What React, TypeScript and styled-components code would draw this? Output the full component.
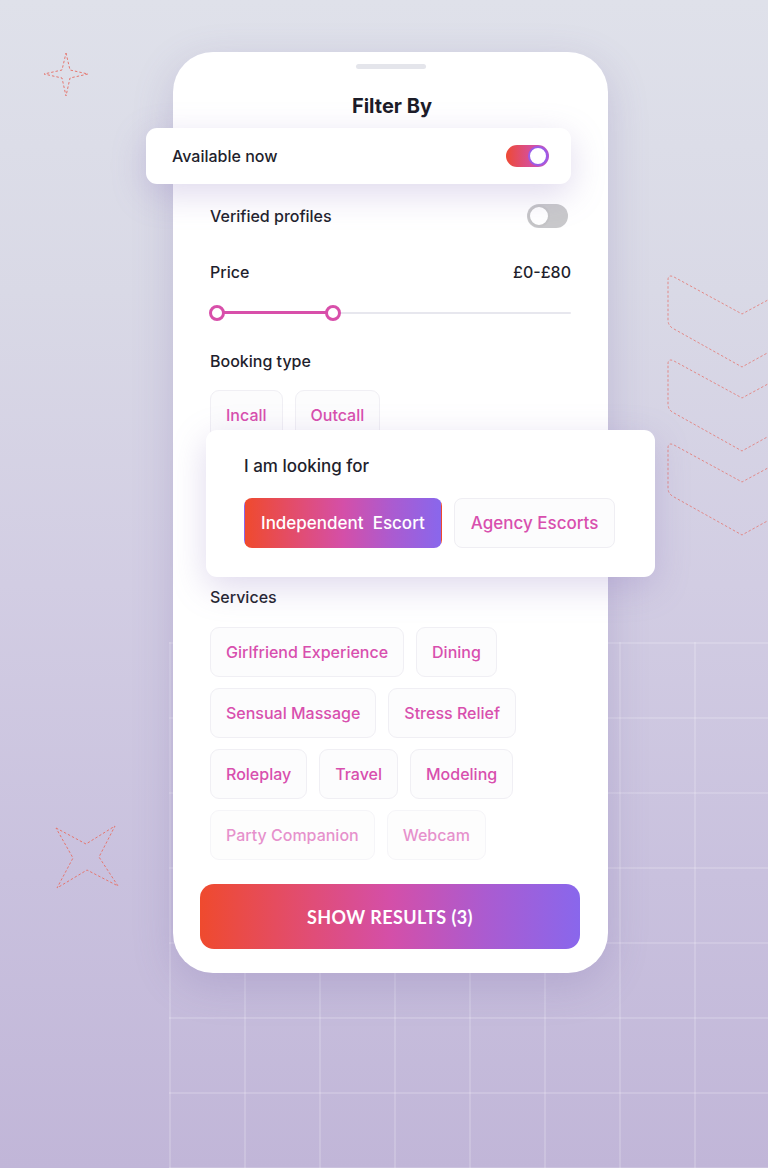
import React from 'react';
import styled, { createGlobalStyle } from 'styled-components';

const GlobalStyle = createGlobalStyle`
  body {
    margin: 0;
    font-family: Inter, "Noto Sans", sans-serif;
    color: #1e1e2c;
  }
`;

const brandGradient = 'linear-gradient(90deg, #ef4a2e 0%, #e04d78 30%, #d44fa8 50%, #ab5bd0 75%, #8967ec 100%)';

// Page and background decorations
const Page = styled.div`
  position: relative;
  width: 768px;
  height: 1168px;
  overflow: hidden;
  box-sizing: border-box;
  padding: 52px 0 0 173px;
  background: linear-gradient(180deg, #dfe1ea 0%, #d9d9e6 25%, #d2cde3 50%, #c9c1de 75%, #c1b6d8 100%);
`;

const Grid = styled.div`
  position: absolute;
  left: 169px;
  top: 642px;
  right: 0;
  bottom: 0;
  background-image:
    linear-gradient(to right, rgba(255, 255, 255, 0.16) 2px, transparent 2px),
    linear-gradient(to bottom, rgba(255, 255, 255, 0.16) 2px, transparent 2px);
  background-size: 75px 75px;
`;

const Deco = styled.svg<{ $left: number; $top: number }>`
  position: absolute;
  left: ${(p) => p.$left}px;
  top: ${(p) => p.$top}px;
  overflow: visible;
`;

// Card
const Card = styled.div`
  position: relative;
  z-index: 1;
  width: 435px;
  height: 921px;
  box-sizing: border-box;
  padding: 12px 37px 24px;
  background: #fff;
  border-radius: 40px;
  box-shadow: 0 12px 40px rgba(110, 90, 160, 0.22);
  display: flex;
  flex-direction: column;
`;

const Handle = styled.div`
  width: 70px;
  height: 5px;
  border-radius: 3px;
  background: #e4e5eb;
  align-self: center;
`;

const Title = styled.h1`
  margin: 25px 0 0 3px;
  font-size: 20px;
  line-height: 24px;
  font-weight: 700;
  text-align: center;
  color: #1c1c28;
`;

const FloatCard = styled.div<{ $width: number; $left: number; $top: number }>`
  position: relative;
  z-index: 2;
  width: ${(p) => p.$width}px;
  margin-left: ${(p) => p.$left}px;
  margin-top: ${(p) => p.$top}px;
  box-sizing: border-box;
  background: #fff;
  border-radius: 11px;
  box-shadow: 0 10px 34px rgba(140, 120, 190, 0.28);
`;

const AvailableRow = styled.div`
  height: 56px;
  padding: 0 22px 0 26px;
  display: flex;
  align-items: center;
  justify-content: space-between;
`;

const Row = styled.div<{ $top: number }>`
  margin-top: ${(p) => p.$top}px;
  height: 24px;
  display: flex;
  align-items: center;
  justify-content: space-between;
`;

const Label = styled.span<{ $size?: number }>`
  font-size: ${(p) => p.$size ?? 16}px;
  line-height: 24px;
  font-weight: 500;
  color: #1f1f2d;
`;

const Value = styled.span`
  font-size: 16px;
  font-weight: 500;
  color: #1f1f2d;
`;

const Toggle = styled.div<{ $on?: boolean }>`
  position: relative;
  width: ${(p) => (p.$on ? 43 : 41)}px;
  height: ${(p) => (p.$on ? 22 : 24)}px;
  border-radius: 12px;
  margin-right: ${(p) => (p.$on ? 0 : 3)}px;
  background: ${(p) => (p.$on ? 'linear-gradient(90deg, #ee4a34 0%, #d64f9c 60%, #b456cf 100%)' : '#c9c9cb')};
`;

const Knob = styled.div<{ $on?: boolean }>`
  position: absolute;
  top: 1px;
  ${(p) => (p.$on ? 'right: 1px;' : 'left: 1px;')}
  width: ${(p) => (p.$on ? 20 : 22)}px;
  height: ${(p) => (p.$on ? 20 : 22)}px;
  box-sizing: border-box;
  border-radius: 50%;
  background: #fff;
  border: 2px solid ${(p) => (p.$on ? '#9a5ce8' : '#c4c4c6')};
`;

const Slider = styled.div`
  position: relative;
  margin-top: 21px;
  height: 16px;
`;

const Track = styled.div`
  position: absolute;
  left: 0;
  right: 0;
  top: 7px;
  height: 2px;
  border-radius: 2px;
  background: #e7e7ee;
`;

const TrackFill = styled.div`
  position: absolute;
  top: 6px;
  height: 3px;
  background: #d84faa;
`;

const Thumb = styled.div`
  position: absolute;
  top: 0;
  width: 16px;
  height: 16px;
  margin-left: -8px;
  box-sizing: border-box;
  border-radius: 50%;
  border: 3px solid #d84faa;
  background: #fff;
`;

const Section = styled.div<{ $top: number }>`
  margin-top: ${(p) => p.$top}px;
  font-size: 16px;
  line-height: 24px;
  font-weight: 500;
  color: #1f1f2d;
`;

const Chips = styled.div<{ $top: number }>`
  margin-top: ${(p) => p.$top}px;
  display: flex;
  flex-wrap: wrap;
  gap: 11px 12px;
`;

const Chip = styled.div<{ $faded?: boolean }>`
  height: 50px;
  box-sizing: border-box;
  padding: 0 15px;
  display: flex;
  align-items: center;
  border: 1px solid #f0eff4;
  border-radius: 9px;
  background: #fcfcfd;
  font-size: 16px;
  font-weight: 500;
  color: #d84fae;
  opacity: ${(p) => (p.$faded ? 0.62 : 1)};
`;

const LookingBody = styled.div`
  padding: 24px 38px 29px;
  display: flex;
  flex-direction: column;
  gap: 20px;
`;

const ChoiceRow = styled.div`
  display: flex;
  gap: 12px;
`;

const Choice = styled.div<{ $active?: boolean }>`
  height: 50px;
  box-sizing: border-box;
  padding: 0 16px;
  display: flex;
  align-items: center;
  border-radius: 8px;
  font-size: 17px;
  font-weight: 500;
  white-space: pre;
  color: ${(p) => (p.$active ? '#fff' : '#d84fae')};
  background: ${(p) => (p.$active ? brandGradient : '#fcfcfd')};
  border: 1px solid ${(p) => (p.$active ? 'transparent' : '#efeef3')};
`;

const ShowButton = styled.button`
  margin: 24px 0 0 -10px;
  width: 380px;
  height: 65px;
  border: none;
  border-radius: 14px;
  background: ${brandGradient};
  color: #fff;
  font-family: Lato, Inter, sans-serif;
  font-size: 18px;
  font-weight: 700;
  letter-spacing: 0.4px;
  text-transform: uppercase;
`;

const services: { label: string; faded?: boolean }[][] = [
  [{ label: 'Girlfriend Experience' }, { label: 'Dining' }],
  [{ label: 'Sensual Massage' }, { label: 'Stress Relief' }],
  [{ label: 'Roleplay' }, { label: 'Travel' }, { label: 'Modeling' }],
  [{ label: 'Party Companion', faded: true }, { label: 'Webcam', faded: true }],
];

const decoStroke = { fill: 'none', stroke: '#e57770', strokeWidth: 1, strokeDasharray: '2.5 2' };

const chevron = (y: number) =>
  `M0 ${y + 6} Q0 ${y} 6 ${y + 3} L74 ${y + 40} L148 ${y} L148 ${y + 52} L74 ${y + 93} L6 ${y + 55} Q0 ${y + 52} 0 ${y + 46} Z`;

const price = { min: 0, max: 240, from: 0, to: 80 };

// thumb position along the track, inset by the thumb radius on both ends
const thumbPos = (v: number) => `calc(7px + (100% - 14px) * ${(v - price.min) / (price.max - price.min)})`;

export default function App() {
  return (
    <>
      <GlobalStyle />
      <Page>
        <Grid />
        <Deco $left={40} $top={50} width="52" height="50" viewBox="40 50 52 50">
          <path d="M66 53 L70 70 L88 74 L70 78 L66 96 L62 78 L44 74 L62 70 Z" {...decoStroke} />
        </Deco>
        <Deco $left={50} $top={820} width="75" height="75" viewBox="50 820 75 75">
          <path d="M56 828 L86 844 L115 826 L99 857 L118 886 L87 870 L57 888 L73 858 Z" {...decoStroke} />
        </Deco>
        <Deco $left={668} $top={260} width="100" height="300" viewBox="0 0 100 300">
          {[14, 98, 182].map((y) => (
            <path key={y} d={chevron(y)} {...decoStroke} opacity={0.8} />
          ))}
        </Deco>

        <Card>
          <Handle />
          <Title>Filter By</Title>

          <FloatCard $width={425} $left={-64} $top={10}>
            <AvailableRow>
              <Label>Available now</Label>
              <Toggle $on>
                <Knob $on />
              </Toggle>
            </AvailableRow>
          </FloatCard>

          <Row $top={20}>
            <Label>Verified profiles</Label>
            <Toggle>
              <Knob />
            </Toggle>
          </Row>

          <Row $top={32}>
            <Label>Price</Label>
            <Value>£0-£80</Value>
          </Row>

          <Slider>
            <Track />
            <TrackFill
              style={{
                left: thumbPos(price.from),
                width: `calc((100% - 14px) * ${(price.to - price.from) / (price.max - price.min)})`,
              }}
            />
            <Thumb style={{ left: thumbPos(price.from) }} />
            <Thumb style={{ left: thumbPos(price.to) }} />
          </Slider>

          <Section $top={28}>Booking type</Section>
          <Chips $top={17}>
            <Chip>Incall</Chip>
            <Chip>Outcall</Chip>
          </Chips>

          <FloatCard $width={449} $left={-4} $top={-10}>
            <LookingBody>
              <Label $size={17}>I am looking for</Label>
              <ChoiceRow>
                <Choice $active>{'Independent  Escort'}</Choice>
                <Choice>Agency Escorts</Choice>
              </ChoiceRow>
            </LookingBody>
          </FloatCard>

          <Section $top={8}>Services</Section>
          <Chips $top={18}>
            {services.map((row) =>
              row.map((s) => (
                <Chip key={s.label} $faded={s.faded}>
                  {s.label}
                </Chip>
              ))
            )}
          </Chips>

          <ShowButton>Show Results (3)</ShowButton>
        </Card>
      </Page>
    </>
  );
}
